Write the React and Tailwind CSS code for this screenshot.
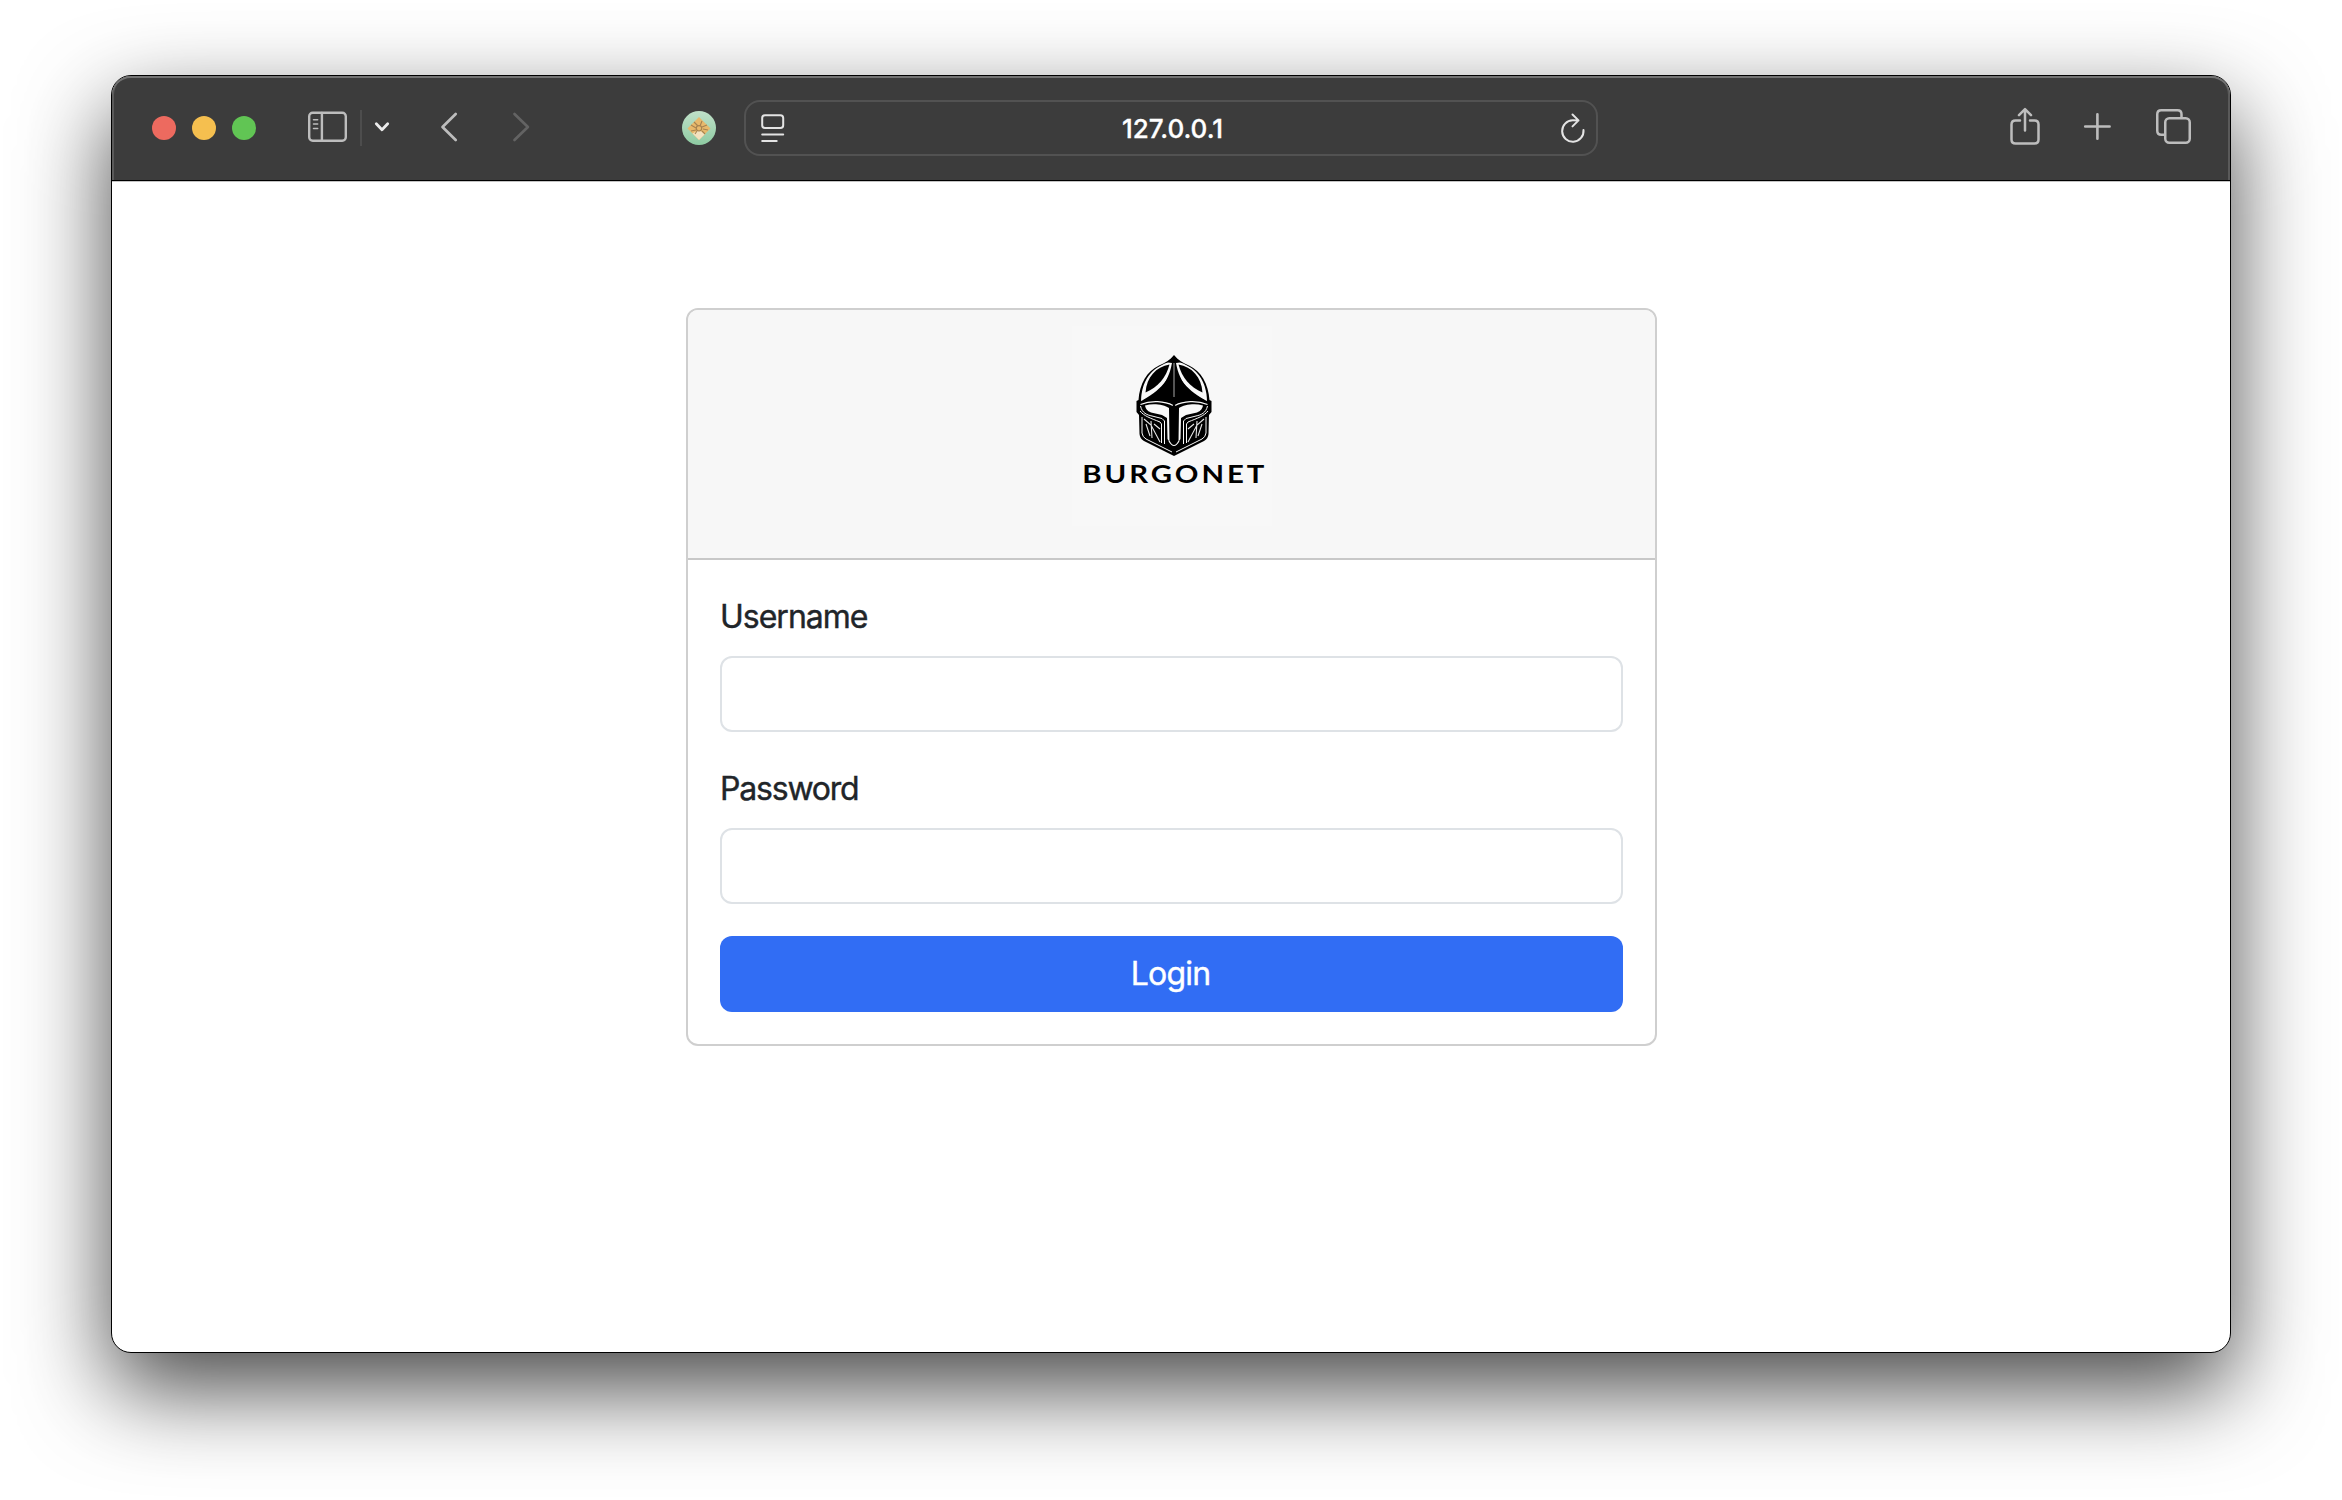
function HelmetSide() {
  return (
    <>
      <path d="M48 17.500 C31 23 21.500 36 21 56 C38 49 48 39 52 18Z" fill="#f9f9f9" />
      <path d="M49.500 19.500 C36 22 26.500 32 25.500 47.500 C38 42 46 33 49.500 19.500Z" fill="#000" />
      <path d="M20.500 59.500 C31 55 45 56 53 60.500" stroke="#f9f9f9" strokeWidth="1.200" />
      <path d="M25 60.500 C34 58 44 60 49 63 L49.500 97 L47.500 94 L47 73 L42 70 L31 67.500 C27 66 25.500 63 25 60.500Z" fill="#f9f9f9" />
      <path d="M20.500 61 C22 68 27 70 32 71 L42 73.500 L44.500 76 V99 M20 66 C24 71 30 73 40 77 L41.500 79 V98 M22 72 V88 Q22.500 92 26 94 L52 107" stroke="#f9f9f9" strokeWidth="1" />
      <path d="M24 74 L31 80 L40 97 M31 76 L32 93 M26 79 L30 91 M34 79 L40 84" stroke="#e5e5e5" strokeWidth="1.100" />
    </>
  );
}

function Helmet() {
  return (
    <svg className="block h-[120px] w-[110px] shrink-0" viewBox="0 0 110 120" fill="none">
      <path d="M54 10 C50 15 45 18 39 20.500 C27 26 19.500 39 18.500 55 L16.500 56 L16.500 67 L19 70 L19.500 89 Q20 94 24 96 L54 111 L84 96 Q88 94 88.500 89 L89 70 L91.500 67 L91.500 56 L89.500 55 C88.500 39 81 26 69 20.500 C63 18 58 15 54 10Z" fill="#000" />
      <HelmetSide />
      <g transform="translate(108 0) scale(-1 1)">
        <HelmetSide />
      </g>
      <path d="M54 13 C52 31 44 43 23 55 L21.500 57.500 C33 54 46 55 54 59.500 C62 55 75 54 86.500 57.500 L85 55 C64 43 56 31 54 13Z" fill="#000" />
      <path d="M54 18 V52" stroke="#bbb" strokeWidth="0.900" />
      <path d="M50.500 62 L54 60 L57.500 62 V97 Q54 104 50.500 97Z" fill="#000" />
      <path d="M49 96 Q54 105 59 96" stroke="#f9f9f9" strokeWidth="1.200" />
    </svg>
  );
}

function Toolbar() {
  return (
    <header className="flex h-[105px] shrink-0 items-start rounded-t-[19px] border-b border-black bg-[#3c3c3c] shadow-[inset_0_2px_0_#737373,inset_2px_0_0_#5a5a5a,inset_-2px_0_0_#5a5a5a]">
      <div className="ml-10 mt-10 flex gap-4">
        <span className="size-6 rounded-full bg-[#ed6a5f]" />
        <span className="size-6 rounded-full bg-[#f5bf4f]" />
        <span className="size-6 rounded-full bg-[#61c554]" />
      </div>
      <svg className="ml-[51px] mt-[35px] h-8 w-10" viewBox="0 0 40 32" fill="none" stroke="#bdbdbd" strokeWidth="2.400" strokeLinecap="round">
        <rect x="2.200" y="1.700" width="36.600" height="28.100" rx="3.500" />
        <path d="M14.900 2v27.500" />
        <path d="M6.500 8.700h4.200M6.500 13.100h4.200M6.500 17.500h4.200" strokeWidth="1.500" />
      </svg>
      <span className="ml-[13px] mt-[34px] h-9 w-0.5 bg-[#4d4d4d]" />
      <svg className="ml-[10px] mt-[43px] h-4 w-5" viewBox="0 0 20 16" fill="none" stroke="#ececec" strokeWidth="2.800" strokeLinecap="round" strokeLinejoin="round">
        <path d="M4.300 4.800 10 10.700l5.700-5.900" />
      </svg>
      <svg className="ml-[45px] mt-[34px] h-8 w-6" viewBox="0 0 24 32" fill="none" stroke="#bdbdbd" strokeWidth="2.700" strokeLinecap="round" strokeLinejoin="round">
        <path d="M18.700 4 5.500 17 18.700 30" />
      </svg>
      <svg className="ml-[49px] mt-[34px] h-8 w-6" viewBox="0 0 24 32" fill="none" stroke="#636363" strokeWidth="2.700" strokeLinecap="round" strokeLinejoin="round">
        <path d="M4.500 4 17.900 17 4.500 30" />
      </svg>
      <svg className="ml-[148px] mt-[35px] size-[34px]" viewBox="0 0 34 34" fill="none">
        <defs>
          <linearGradient id="mint" x1="0" y1="0" x2="0" y2="1">
            <stop stopColor="#c0e1c9" />
            <stop offset="1" stopColor="#8ecba2" />
          </linearGradient>
        </defs>
        <circle cx="17" cy="17" r="17" fill="url(#mint)" />
        <path d="M17 6 28.500 17.500 17 29 5.500 17.500Z" fill="#e8b96b" />
        <path d="M10.500 22.500 17 29 23 23 17 19Z" fill="#f3e2c0" />
        <path d="M9 14l5 3M12 11l4 4M20 10l-2 5M25 14l-5 2M9 20l5-1M13 23l2-3M20 20l3 3M21 18l5 1" stroke="#a68350" strokeWidth="1.100" />
        <circle cx="17" cy="17.300" r="2.700" stroke="#a68350" strokeWidth="1.100" fill="#e8b96b" />
      </svg>
      <div className="ml-[28px] mt-[24px] flex h-14 w-[854px] items-center rounded-[16px] border-2 border-[#525252]">
        <svg className="ml-[14px] h-[30px] w-[26px]" viewBox="0 0 26 30" fill="none" stroke="#e4e4e4" strokeWidth="2" strokeLinecap="round">
          <rect x="2.200" y="2.200" width="21" height="12.800" rx="2.800" />
          <path d="M2.200 21.400h21M2.200 28h14.500" />
        </svg>
        <span className="grow pt-0.5 pr-px text-center font-['Inter'] text-[26px] font-medium leading-none tracking-[-0.05px] text-white [-webkit-text-stroke:0.3px_white]">127.0.0.1</span>
        <svg className="mr-[10px] h-[30px] w-[26px]" viewBox="0 0 26 30" fill="none" stroke="#e4e4e4" strokeWidth="2" strokeLinecap="round" strokeLinejoin="round">
          <path d="M23.500 17A10.700 10.700 0 1 1 12.800 7.300L18.500 7.400M12.500 1.500l6 5.900-6 6" />
        </svg>
      </div>
      <svg className="ml-[410px] mt-[30px] h-10 w-[34px]" viewBox="0 0 34 40" fill="none" stroke="#bdbdbd" strokeWidth="2.500" strokeLinecap="round" strokeLinejoin="round">
        <path d="M12 14.500H7.500Q3.500 14.500 3.500 18.500V33.500Q3.500 37.500 7.500 37.500H26.500Q30.500 37.500 30.500 33.500V18.500Q30.500 14.500 26.500 14.500H22M17 24.500V4M11 9.200 17 3.200l6 6" />
      </svg>
      <svg className="ml-[40px] mt-[36px] size-[30px]" viewBox="0 0 30 30" fill="none" stroke="#bdbdbd" strokeWidth="2.600" strokeLinecap="round">
        <path d="M15.400 2.300v24.400M3.200 14.500h24.400" />
      </svg>
      <svg className="ml-[41px] mt-[32px] h-[38px] w-[40px]" viewBox="0 0 40 38" fill="none" stroke="#bdbdbd" strokeWidth="2.500">
        <rect x="12.250" y="10.250" width="24.500" height="24.500" rx="4" />
        <path d="M11.500 26.800H8.300Q4.250 26.800 4.250 22.800V6.300Q4.250 2.250 8.300 2.250H24.500Q28.500 2.250 28.500 6.300V10" />
      </svg>
    </header>
  );
}

function Field({ label, type, tracking }) {
  return (
    <label className="mb-8 block">
      <span className={`mb-[15px] block pt-px font-['Inter'] text-[32px] leading-[48px] text-[#212529] [-webkit-text-stroke:0.4px_#212529] ${tracking}`}>{label}</span>
      <input type={type} className="block h-[76px] w-full rounded-[12px] border-2 border-[#dee2e6] bg-white px-6 outline-none" />
    </label>
  );
}

export default function App() {
  return (
    <div className="h-[1500px] w-[2342px] overflow-hidden bg-white pl-[111px] pt-[75px]">
      <div className="flex h-[1278px] w-[2120px] flex-col rounded-[20px] border border-black bg-white shadow-[0_36px_90px_rgba(0,0,0,0.72)]">
        <Toolbar />
        <main className="grow rounded-b-[19px] border-t border-[#c4c4c4] pl-[574px]">
          <section className="mt-[126px] h-[738px] w-[971px] overflow-hidden rounded-[12px] border-2 border-[#cfcfcf] bg-white">
            <div className="flex h-[250px] justify-center border-b-2 border-[#c8c8c8] bg-[#f7f7f7] pt-4">
              <div className="flex size-[200px] flex-col items-center bg-[#f8f8f8] pl-[7px] pt-[19px]">
                <Helmet />
                <div className="-mt-[3px] scale-x-[1.22] font-['Lato'] text-[24px] font-bold leading-[24px] tracking-[2.4px] text-black">BURGONET</div>
              </div>
            </div>
            <form className="px-8 pt-8">
              <Field label="Username" type="text" tracking="tracking-[-1px]" />
              <Field label="Password" type="password" tracking="tracking-[-1.2px]" />
              <button type="button" className="block h-[76px] w-full rounded-[12px] bg-[#316df4] pr-0.5 font-['Inter'] text-[32px] leading-none tracking-[-0.8px] text-white [-webkit-text-stroke:0.4px_white]">Login</button>
            </form>
          </section>
        </main>
      </div>
    </div>
  );
}
